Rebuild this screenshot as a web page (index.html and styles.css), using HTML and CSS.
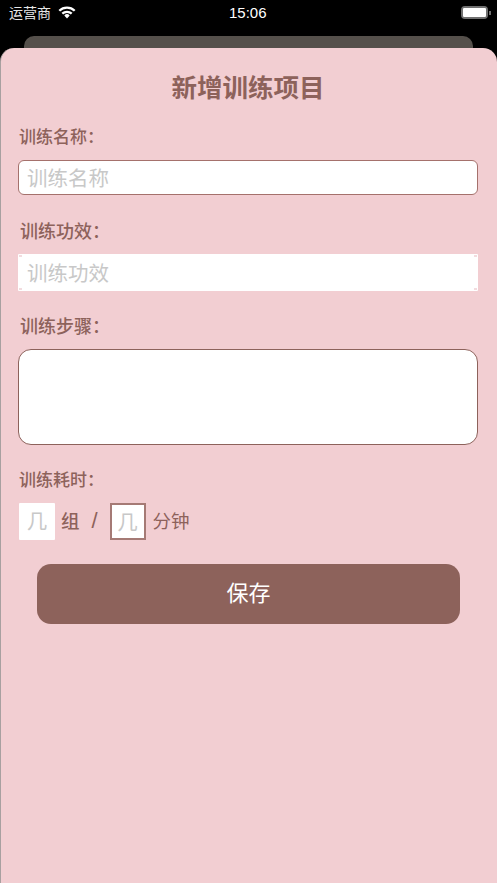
FILE: index.html
```html
<!DOCTYPE html>
<html lang="zh-CN">
<head>
  <meta charset="UTF-8" />
  <meta name="viewport" content="width=device-width, initial-scale=1.0"/>
  <title>新增训练项目</title>
  <link rel="stylesheet" href="styles.css">
</head>
<body>
  <div class="status-bar">
    <div class="status-left">
      <span class="carrier">运营商</span>
      <svg class="wifi-icon" viewBox="0 0 18 13" width="18" height="13">
        <path d="M1.300 4.800A11 11 0 0 1 16.700 4.800" fill="none" stroke="#fff" stroke-width="2.300"/>
        <path d="M4.300 7.700A6.800 6.800 0 0 1 13.700 7.700" fill="none" stroke="#fff" stroke-width="2.300"/>
        <path d="M6.300 9.400A3.900 3.900 0 0 1 11.700 9.400L9 12.400Z" fill="#fff"/>
      </svg>
    </div>
    <span class="clock">15:06</span>
    <div class="battery">
      <div class="battery-body"><div class="battery-fill"></div></div>
      <div class="battery-cap"></div>
    </div>
  </div>

  <div class="back-card"></div>

  <div class="sheet">
    <h1 class="sheet-title">新增训练项目</h1>

    <label class="field-label label-name">训练名称：</label>
    <div class="input input-name">训练名称</div>

    <label class="field-label label-effect">训练功效：</label>
    <div class="input input-effect nicked">训练功效</div>

    <label class="field-label label-steps">训练步骤：</label>
    <div class="textarea"></div>

    <label class="field-label label-time">训练耗时：</label>
    <div class="time-row">
      <div class="mini-input mini-plain nicked">几</div>
      <span class="unit unit-sets">组</span>
      <span class="slash">/</span>
      <div class="mini-input mini-outlined">几</div>
      <span class="unit unit-mins">分钟</span>
    </div>

    <button class="save-button">保存</button>
  </div>
</body>
</html>
```

FILE: styles.css
```css
* {
  box-sizing: border-box;
}
body {
  font-family: "Noto Sans CJK SC", "Liberation Sans", sans-serif;
  background: #000;
  margin: 0;
  width: 497px;
  height: 883px;
  overflow: hidden;
  display: flex;
  flex-direction: column;
}
.status-bar {
  height: 36px;
  padding: 0 6px 6px 9px;
  display: flex;
  justify-content: space-between;
  align-items: center;
  color: #fff;
  position: relative;
}
.status-left {
  display: flex;
  align-items: center;
  gap: 7px;
}
.carrier {
  font-size: 14px;
  color: #e6e6e6;
  margin-bottom: 7px;
}
.wifi-icon {
  display: block;
  margin-bottom: 6px;
}
.clock {
  font-family: "Liberation Sans", sans-serif;
  font-size: 15px;
  position: absolute;
  left: 229px;
  top: 4px;
}
.battery {
  display: flex;
  align-items: center;
  margin-bottom: 5px;
}
.battery-body {
  width: 27px;
  height: 13px;
  border: 2px solid #707070;
  border-radius: 4px;
  padding: 0;
}
.battery-fill {
  height: 100%;
  background: #fff;
  border-radius: 1px;
}
.battery-cap {
  width: 2px;
  height: 4px;
  margin-left: 1px;
  background: #707070;
}
.back-card {
  height: 12px;
  margin: 0 24px;
  background: #55504b;
  border-radius: 10px 10px 0 0;
  flex-shrink: 0;
}
.sheet {
  flex-grow: 1;
  background: #f2ced2;
  border-left: 1px solid #a8a0a0;
  border-radius: 14px 14px 0 0;
  padding: 0 19px 0 17px;
  color: #8d625b;
}
.sheet-title {
  margin: 20px 0 0;
  font-size: 25.500px;
  line-height: 36px;
  font-weight: 700;
  text-align: center;
}
.field-label {
  display: block;
  font-weight: 500;
  font-size: 17px;
  line-height: 24px;
}
.label-name {
  margin: 20px 0 0 1px;
}
.label-effect {
  margin: 23px 0 0 2px;
  font-size: 18px;
}
.label-steps {
  margin: 22px 0 0 2px;
  font-size: 18px;
}
.label-time {
  margin: 22px 0 0 1px;
}
.input {
  height: 35px;
  margin-top: 12px;
  padding-left: 8px;
  background: #fff;
  color: #c8c8c8;
  font-size: 20.500px;
  line-height: 33px;
}
.input-name {
  border: 1px solid #a5716c;
  border-radius: 6px;
}
.input-effect {
  height: 37px;
  line-height: 37px;
  padding-left: 9px;
}
/* small pale marks at the corners of the borderless fields */
.nicked {
  border-radius: 1px;
  background:
    linear-gradient(#f2dcdf, #f2dcdf) 1px 1px / 3px 2px no-repeat,
    linear-gradient(#f2dcdf, #f2dcdf) calc(100% - 1px) 1px / 3px 2px no-repeat,
    linear-gradient(#f2dcdf, #f2dcdf) 1px calc(100% - 1px) / 3px 2px no-repeat,
    linear-gradient(#f2dcdf, #f2dcdf) calc(100% - 1px) calc(100% - 1px) / 3px 2px no-repeat,
    #fff;
}
.textarea {
  height: 96px;
  margin-top: 12px;
  background: #fff;
  border: 1px solid #8d625b;
  border-radius: 13px;
}
.time-row {
  display: flex;
  align-items: center;
  margin-top: 12px;
  height: 37px;
}
.mini-input {
  width: 36px;
  height: 37px;
  background: #fff;
  color: #c8c8c8;
  font-size: 20.500px;
  line-height: 35px;
  text-align: center;
}
.mini-plain {
  margin-left: 1px;
}
.mini-outlined {
  margin-left: 12px;
  border: 2px solid #a57a75;
  line-height: 33px;
}
.unit {
  font-size: 18.500px;
  margin-bottom: 3px;
}
.unit-sets {
  margin-left: 6px;
  font-weight: 500;
}
.unit-mins {
  margin-left: 7px;
}
.slash {
  margin-left: 12px;
  margin-bottom: 1px;
  font-size: 22px;
  font-family: "Liberation Sans", sans-serif;
  width: 6px;
}
.save-button {
  display: block;
  width: 423px;
  height: 60px;
  margin: 24px 0 0 19px;
  padding-bottom: 8px;
  border: none;
  border-radius: 14px;
  background: #8d625b;
  color: #fff;
  font-family: inherit;
  font-size: 22px;
}
```
